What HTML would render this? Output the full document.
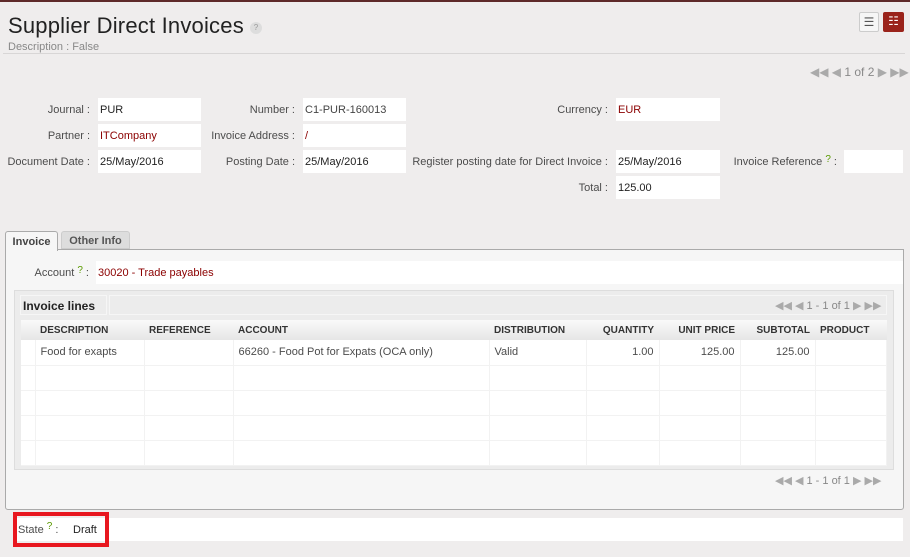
<!DOCTYPE html>
<html><head><meta charset="utf-8"><style>
*{margin:0;padding:0;box-sizing:border-box}
body{width:910px;height:557px;background:#efeded;font-family:"Liberation Sans",sans-serif;font-size:11px;color:#4c4c4c;position:relative;overflow:hidden}
.a{position:absolute}
.box{position:absolute;background:#fff;height:23px}
.lbl{position:absolute;text-align:right;line-height:25px;color:#4c4c4c}
.val{position:absolute;line-height:25px;color:#222}
.red{color:#8b0000}
.q{color:#5a9a00;font-size:10px;vertical-align:top;position:relative;top:-3px}
.pg{color:#aaa;font-size:11px}
table{border-collapse:collapse;position:absolute}
td,th{font-size:11px;height:25px;border-right:1px solid #f2f2f2;border-bottom:1px solid #f2f2f2;padding:0 5px;white-space:nowrap}
th{height:20px;font-size:10px;font-weight:bold;color:#333;text-align:left;background:linear-gradient(#fafafa,#e6e6e6);border:none}
</style></head><body>
<div class="a" style="left:0;top:0;width:910px;height:2px;background:#5e2a2a"></div>
<div class="a" style="left:8px;top:13px;font-size:22px;letter-spacing:0.2px;color:#222">Supplier Direct Invoices</div>
<div class="a" style="left:250px;top:22px;width:12px;height:12px;border-radius:6px;background:#ddd;color:#999;font-size:8px;text-align:center;line-height:12px">?</div>
<div class="a" style="left:8px;top:41px;color:#888">Description : False</div>
<div class="a" style="left:3px;top:53px;width:902px;height:1px;background:#d8d6d6"></div>
<div class="a" style="left:859px;top:12px;width:20px;height:20px;border:1px solid #ccc;border-radius:2px;background:#f6f6f6;color:#555;text-align:center;line-height:18px;font-size:12px">☰</div>
<div class="a" style="left:883px;top:12px;width:21px;height:20px;border-radius:2px;background:#9a231b;color:#fff;text-align:center;line-height:19px;font-size:12px">☷</div>
<div class="a pg" style="left:810px;top:65px;font-size:12px">◀◀ ◀ <span style="color:#888">1 of 2</span> ▶ ▶▶</div>

<div class="lbl" style="left:0;width:90px;top:98px">Journal :</div>
<div class="box" style="left:98px;top:98px;width:103px"></div><div class="val" style="left:100px;top:98px">PUR</div>
<div class="lbl" style="left:180px;width:115px;top:98px">Number :</div>
<div class="box" style="left:303px;top:98px;width:103px"></div><div class="val" style="left:305px;top:98px;color:#444">C1-PUR-160013</div>
<div class="lbl" style="left:500px;width:108px;top:98px">Currency :</div>
<div class="box" style="left:616px;top:98px;width:104px"></div><div class="val red" style="left:618px;top:98px">EUR</div>

<div class="lbl" style="left:0;width:90px;top:124px">Partner :</div>
<div class="box" style="left:98px;top:124px;width:103px"></div><div class="val red" style="left:100px;top:124px">ITCompany</div>
<div class="lbl" style="left:180px;width:115px;top:124px">Invoice Address :</div>
<div class="box" style="left:303px;top:124px;width:103px"></div><div class="val red" style="left:305px;top:124px">/</div>

<div class="lbl" style="left:0;width:90px;top:150px">Document Date :</div>
<div class="box" style="left:98px;top:150px;width:103px"></div><div class="val" style="left:100px;top:150px">25/May/2016</div>
<div class="lbl" style="left:180px;width:115px;top:150px">Posting Date :</div>
<div class="box" style="left:303px;top:150px;width:103px"></div><div class="val" style="left:305px;top:150px">25/May/2016</div>
<div class="lbl" style="left:410px;width:198px;top:150px">Register posting date for Direct Invoice :</div>
<div class="box" style="left:616px;top:150px;width:104px"></div><div class="val" style="left:618px;top:150px">25/May/2016</div>
<div class="lbl" style="left:725px;width:112px;top:150px">Invoice Reference <span class="q">?</span> :</div>
<div class="box" style="left:844px;top:150px;width:59px"></div>

<div class="lbl" style="left:500px;width:108px;top:176px">Total :</div>
<div class="box" style="left:616px;top:176px;width:104px"></div><div class="val" style="left:618px;top:176px">125.00</div>

<div class="a" style="left:5px;top:249px;width:899px;height:261px;border:1px solid #aaa;border-radius:0 0 3px 3px;background:#f6f6f6"></div>
<div class="a" style="left:5px;top:231px;width:53px;height:20px;border:1px solid #aaa;border-bottom:none;background:#f6f6f6;border-radius:3px 3px 0 0;font-weight:bold;font-size:11px;line-height:20px;text-align:center;color:#444">Invoice</div>
<div class="a" style="left:61px;top:231px;width:69px;height:18px;background:#ddd;border:1px solid #ccc;border-radius:3px 3px 0 0;font-weight:bold;font-size:11px;line-height:18px;text-align:center;color:#555">Other Info</div>

<div class="lbl" style="left:14px;width:75px;top:261px">Account <span class="q">?</span> :</div>
<div class="box" style="left:96px;top:261px;width:807px"></div><div class="val red" style="left:98px;top:261px">30020 - Trade payables</div>

<div class="a" style="left:14px;top:290px;width:880px;height:180px;border:1px solid #ddd;background:#ececec"></div>
<div class="a" style="left:20px;top:295px;width:87px;height:20px;background:#ececec;border:1px solid #f6f6f6;font-weight:bold;font-size:12px;color:#222;line-height:20px;padding-left:2px">Invoice lines</div>
<div class="a" style="left:109px;top:295px;width:778px;height:20px;border:1px solid #f6f6f6"></div>
<div class="a pg" style="left:775px;top:299px">◀◀ ◀ <span style="color:#888">1 - 1 of 1</span> ▶ ▶▶</div>

<table style="left:21px;top:320px;width:866px;background:#fff">
<tr><th style="width:14px"></th><th style="width:109px">DESCRIPTION</th><th style="width:89px">REFERENCE</th><th style="width:256px">ACCOUNT</th><th style="width:97px">DISTRIBUTION</th><th style="width:73px;text-align:right">QUANTITY</th><th style="width:81px;text-align:right">UNIT PRICE</th><th style="width:75px;text-align:right">SUBTOTAL</th><th>PRODUCT</th></tr>
<tr><td></td><td>Food for exapts</td><td></td><td>66260 - Food Pot for Expats (OCA only)</td><td>Valid</td><td style="text-align:right">1.00</td><td style="text-align:right">125.00</td><td style="text-align:right">125.00</td><td></td></tr>
<tr><td></td><td></td><td></td><td></td><td></td><td></td><td></td><td></td><td></td></tr>
<tr><td></td><td></td><td></td><td></td><td></td><td></td><td></td><td></td><td></td></tr>
<tr><td></td><td></td><td></td><td></td><td></td><td></td><td></td><td></td><td></td></tr>
<tr><td></td><td></td><td></td><td></td><td></td><td></td><td></td><td></td><td></td></tr>
</table>
<div class="a pg" style="left:775px;top:474px">◀◀ ◀ <span style="color:#888">1 - 1 of 1</span> ▶ ▶▶</div>

<div class="box" style="left:13px;top:518px;width:890px"></div>
<div class="a" style="left:18px;top:518px;line-height:24px">State <span class="q">?</span> :</div>
<div class="val" style="left:73px;top:518px;line-height:24px">Draft</div>
<div class="a" style="left:13px;top:512px;width:96px;height:35px;border:4px solid #e8171f"></div>
</body></html>
